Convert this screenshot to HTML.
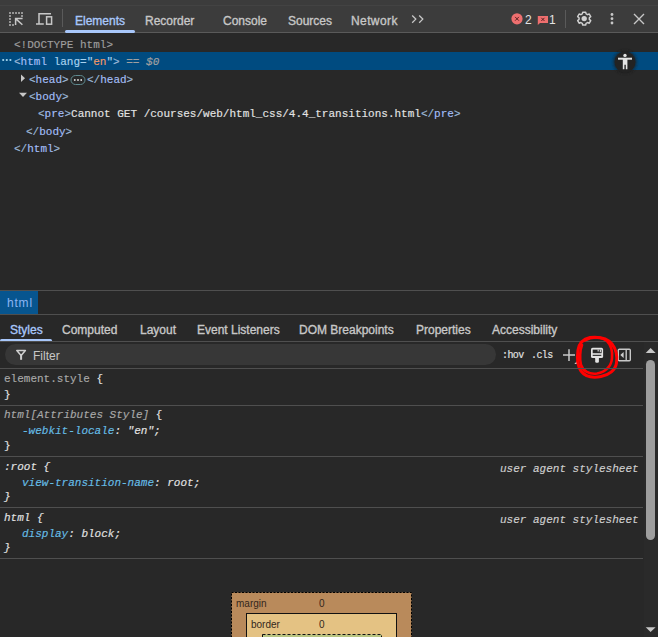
<!DOCTYPE html>
<html><head><meta charset="utf-8">
<style>
*{margin:0;padding:0;box-sizing:border-box}
html,body{width:658px;height:637px;overflow:hidden;background:#282828}
body{position:relative;font-family:"Liberation Sans",sans-serif;font-size:12px;color:#c7c7c7}
.abs{position:absolute}
.mono{font-family:"Liberation Mono",monospace;font-size:11px;white-space:pre;-webkit-text-stroke-width:0.15px}
.t{position:absolute;white-space:pre;line-height:14px}
.hl{position:absolute;left:0;width:658px;height:1px;background:#4f4f4f}
#toolbar{position:absolute;left:0;top:0;width:658px;height:32px;background:#3c3c3c}
.tab{position:absolute;top:14px;font-size:12px;color:#c7c7c7;line-height:14px;-webkit-text-stroke:0.35px #c7c7c7}
.tg{color:#a3bef7}
.br{color:#9db8d8}
.an{color:#a8d2ef}
.av{color:#f29766}
.tx{color:#e3e3e3}
.prop{color:#66bde6}
.val{color:#e3e3e3}
svg{position:absolute;overflow:visible}
</style></head>
<body>
<div id="toolbar"></div>
<div class="hl" style="top:32px;background:#5a5a5a"></div>
<div class="hl" style="top:5px;background:#434343"></div>

<!-- toolbar icons -->
<svg style="left:0;top:0" width="658" height="32" viewBox="0 0 658 32">
  <g fill="#c7c7c7">
    <rect x="9.2" y="12.2" width="1.6" height="1.6"/><rect x="12.2" y="12.2" width="1.6" height="1.6"/><rect x="15.2" y="12.2" width="1.6" height="1.6"/><rect x="18.2" y="12.2" width="1.6" height="1.6"/><rect x="21.2" y="12.2" width="1.6" height="1.6"/>
    <rect x="9.2" y="15.2" width="1.6" height="1.6"/><rect x="21.2" y="15.2" width="1.6" height="1.6"/>
    <rect x="9.2" y="18.2" width="1.6" height="1.6"/><rect x="9.2" y="21.2" width="1.6" height="1.6"/><rect x="9.2" y="24.2" width="1.6" height="1.6"/><rect x="12.2" y="24.2" width="1.6" height="1.6"/>
  </g>
  <path d="M15.6 25 V18.6 H22.6 M15.6 18.6 L22.4 24.8" stroke="#c7c7c7" stroke-width="1.5" fill="none"/>
  <path d="M51 13.7 H39 V23.9 M36 23.9 H43.8" stroke="#c7c7c7" stroke-width="1.5" fill="none"/>
  <rect x="46.6" y="16.8" width="5" height="7.4" stroke="#c7c7c7" stroke-width="1.5" fill="none"/>
  <rect x="62" y="9" width="1" height="18" fill="#5a5a5a"/>
  <!-- >> -->
  <path d="M412.2 15.5 L415.8 19.1 L412.2 22.7 M419.2 15.5 L422.8 19.1 L419.2 22.7" stroke="#c7c7c7" stroke-width="1.3" fill="none"/>
  <!-- error -->
  <circle cx="517" cy="18.8" r="5.6" fill="#ee6f6f"/>
  <path d="M515.1 16.9 L518.9 20.7 M518.9 16.9 L515.1 20.7" stroke="#4a1a1a" stroke-width="0.9"/>
  <!-- message -->
  <path d="M537.8 16 H548 V23 H540 L537.8 25 Z" fill="#ee6f6f"/>
  <path d="M541.3 17.8 L544.5 21 M544.5 17.8 L541.3 21" stroke="#4a1a1a" stroke-width="0.9"/>
  <rect x="565" y="10" width="1" height="18" fill="#5a5a5a"/>
  <!-- gear -->
  <g transform="translate(584.2 18.6) scale(0.92)">
    <path d="M-1.6,-7 L1.6,-7 L2.1,-5.1 L3.6,-4.3 L5.5,-5 L7.1,-2.2 L5.6,-0.9 L5.6,0.9 L7.1,2.2 L5.5,5 L3.6,4.3 L2.1,5.1 L1.6,7 L-1.6,7 L-2.1,5.1 L-3.6,4.3 L-5.5,5 L-7.1,2.2 L-5.6,0.9 L-5.6,-0.9 L-7.1,-2.2 L-5.5,-5 L-3.6,-4.3 L-2.1,-5.1 Z" stroke="#d0d0d0" stroke-width="1.6" fill="none" stroke-linejoin="round"/>
    <circle r="2.9" fill="#d0d0d0"/>
  </g>
  <!-- kebab -->
  <circle cx="612" cy="14.5" r="1.4" fill="#c7c7c7"/><circle cx="612" cy="18.7" r="1.4" fill="#c7c7c7"/><circle cx="612" cy="23" r="1.4" fill="#c7c7c7"/>
  <!-- close -->
  <path d="M634 14 L644 24 M644 14 L634 24" stroke="#c7c7c7" stroke-width="1.4"/>
</svg>

<!-- tabs -->
<div class="tab" style="left:75px;color:#a8c7fa;-webkit-text-stroke-color:#a8c7fa">Elements</div>
<div class="abs" style="left:65px;top:30px;width:70px;height:3px;background:#a8c7fa;border-radius:2px"></div>
<div class="tab" style="left:145px">Recorder</div>
<div class="tab" style="left:223px">Console</div>
<div class="tab" style="left:288px">Sources</div>
<div class="tab" style="left:351px;letter-spacing:0.4px">Network</div>
<div class="tab" style="left:525px;top:13px;color:#e3e3e3;-webkit-text-stroke:0">2</div>
<div class="tab" style="left:549px;top:13px;color:#e3e3e3;-webkit-text-stroke:0">1</div>

<!-- elements tree -->
<div class="abs" style="left:0;top:52px;width:658px;height:18px;background:#004b80"></div>
<svg style="left:0;top:0" width="658" height="160">
  <circle cx="3.2" cy="60" r="1.1" fill="#a8d8f0"/><circle cx="6.8" cy="60" r="1.1" fill="#a8d8f0"/><circle cx="10.4" cy="60" r="1.1" fill="#a8d8f0"/>
  <path d="M21 74.5 L25 78.2 L21 82 Z" fill="#c7c7c7"/>
  <path d="M19 92.8 L27 92.8 L23 97 Z" fill="#c7c7c7"/>
  <rect x="71" y="75.5" width="14" height="9" rx="4.5" stroke="#5f8a8f" stroke-width="1" fill="none"/>
  <circle cx="74.8" cy="80" r="0.9" fill="#e3e3e3"/><circle cx="78" cy="80" r="0.9" fill="#e3e3e3"/><circle cx="81.2" cy="80" r="0.9" fill="#e3e3e3"/>
  <!-- accessibility button -->
  <circle cx="625" cy="62" r="12" fill="#1f1f1f" opacity="0.55" filter="url(#blur)"/>
  <circle cx="625" cy="62" r="10.5" fill="#232323"/>
  <defs><filter id="blur" x="-50%" y="-50%" width="200%" height="200%"><feGaussianBlur stdDeviation="1.2"/></filter></defs>
  <circle cx="625" cy="55.4" r="1.7" fill="#e3e3e3"/>
  <path d="M618 58.7 H632" stroke="#e3e3e3" stroke-width="2" fill="none"/>
  <path d="M622.8 58.7 H627.4 V69.3 H625.8 V64.8 H624.4 V69.3 H622.8 Z" fill="#e3e3e3"/>
</svg>
<div class="mono t" style="left:14px;top:38px;color:#9e9e9e">&lt;!DOCTYPE html&gt;</div>
<div class="mono t" style="left:14px;top:55px"><span class="br">&lt;</span><span class="tg">html</span> <span class="an">lang</span><span class="an">="</span><span class="av">en</span><span class="an">"</span><span class="br">&gt;</span><span style="color:#a0a0a0"> == <i>$0</i></span></div>
<div class="mono t" style="left:29px;top:73px"><span class="br">&lt;</span><span class="tg">head</span><span class="br">&gt;</span></div>
<div class="mono t" style="left:87px;top:73px"><span class="br">&lt;/</span><span class="tg">head</span><span class="br">&gt;</span></div>
<div class="mono t" style="left:29px;top:90px"><span class="br">&lt;</span><span class="tg">body</span><span class="br">&gt;</span></div>
<div class="mono t" style="left:38px;top:107px"><span class="br">&lt;</span><span class="tg">pre</span><span class="br">&gt;</span><span class="tx">Cannot GET /courses/web/html_css/4.4_transitions.html</span><span class="br">&lt;/</span><span class="tg">pre</span><span class="br">&gt;</span></div>
<div class="mono t" style="left:26px;top:125px"><span class="br">&lt;/</span><span class="tg">body</span><span class="br">&gt;</span></div>
<div class="mono t" style="left:14px;top:142px"><span class="br">&lt;/</span><span class="tg">html</span><span class="br">&gt;</span></div>

<!-- breadcrumbs -->
<div class="hl" style="top:290px"></div>
<div class="abs" style="left:0;top:291px;width:38px;height:23px;background:#07558f"></div>
<div class="t" style="left:7px;top:296px;color:#8cb6f5;letter-spacing:0.8px">html</div>
<div class="hl" style="top:314px"></div>

<!-- sidebar tabs -->
<div class="tab" style="left:10px;top:323px;color:#a8c7fa;-webkit-text-stroke-color:#a8c7fa">Styles</div>
<div class="abs" style="left:0;top:339px;width:52px;height:3px;background:#a8c7fa;border-radius:2px"></div>
<div class="tab" style="left:62px;top:323px">Computed</div>
<div class="tab" style="left:140px;top:323px">Layout</div>
<div class="tab" style="left:197px;top:323px">Event Listeners</div>
<div class="tab" style="left:299px;top:323px">DOM Breakpoints</div>
<div class="tab" style="left:416px;top:323px">Properties</div>
<div class="tab" style="left:492px;top:323px">Accessibility</div>
<div class="hl" style="top:341px"></div>

<!-- filter -->
<div class="abs" style="left:644px;top:342px;width:14px;height:295px;background:#2a2a2a"></div>

<div class="abs" style="left:5px;top:344px;width:491px;height:21px;background:#373737;border-radius:10.5px"></div>
<svg style="left:0;top:0" width="658" height="380">
  <path d="M16.8 350.6 H25.4 L21.1 355.6 Z" stroke="#d0d0d0" stroke-width="1.5" fill="none" stroke-linejoin="round"/><rect x="20.1" y="355" width="2" height="4.8" fill="#d0d0d0"/>
  <path d="M563 355 H575 M569 349.2 V361" stroke="#c7c7c7" stroke-width="1.5"/>
  <path d="M577 361.3 L577 364 L574.3 364 Z" fill="#d0d0d0"/>
  <!-- paint brush -->
  <rect x="591" y="347.8" width="12.1" height="10.2" rx="1.6" fill="#e3e3e3"/>
  <rect x="592.7" y="349.6" width="8.9" height="3.6" fill="#282828"/>
  <rect x="597.6" y="349.6" width="1.1" height="1.9" fill="#e3e3e3"/>
  <rect x="599.8" y="349.6" width="1.1" height="2.6" fill="#e3e3e3"/>
  <rect x="592.7" y="354.8" width="8.6" height="1.1" fill="#282828"/>
  <rect x="595.2" y="357" width="3.7" height="5.8" rx="1.2" fill="#e3e3e3"/>
  <!-- sidebar toggle -->
  <rect x="618.3" y="349.2" width="12" height="11.5" stroke="#c7c7c7" stroke-width="1.4" fill="none" rx="1"/>
  <path d="M626.2 349.2 V360.7" stroke="#c7c7c7" stroke-width="1.4"/>
  <path d="M623.6 352 L620.3 355 L623.6 358 Z" fill="#d0d0d0"/>
  <!-- red annotation -->
  <g stroke="#f00" stroke-width="3" fill="none" stroke-linecap="round">
  <path d="M590 337.5 C600 336.5,608 339,612 344 C616 349,617.5 356,616.5 363 C615.5 370,609 375,601 376.5 C593 378,585 376.5,581 371 C577.5 366,577 357,578 350 C579 344,583 339,590 337.5"/>
  <path d="M585 340.5 C592 336,602 337,607 341 C611 345,612.5 352,612 358 C611.5 366,606 372,597 373.5 C589 374.5,583 371,581 365 C579.5 359,580 350,582 345" stroke-width="2.6"/>
  </g>
  <!-- scrollbar arrows -->
  <path d="M645.7 353 L650.6 348 L655.6 353 Z" fill="#c7c7c7"/>
  <path d="M645.7 627.3 L650.6 632 L655.6 627.3 Z" fill="#c7c7c7"/>
</svg>
<div class="t" style="left:33px;top:349px;color:#c7c7c7">Filter</div>
<div class="mono t" style="left:502px;top:349px;font-size:10px;letter-spacing:-0.6px;color:#e3e3e3">:hov</div>
<div class="mono t" style="left:531px;top:349px;font-size:10px;letter-spacing:-0.6px;color:#e3e3e3">.cls</div>
<div class="hl" style="top:368px;width:643px"></div>
<div class="abs" style="left:646px;top:360px;width:9px;height:180px;background:#9e9e9e;border-radius:4.5px"></div>

<!-- rules -->
<div class="mono t" style="left:4px;top:372px;color:#a8a8a8">element.style <span class="val">{</span></div>
<div class="mono t" style="left:4px;top:388px;color:#e3e3e3">}</div>
<div class="hl" style="top:405px;width:643px"></div>
<div class="mono t" style="left:4px;top:408px;color:#a8a8a8"><i>html[Attributes Style]</i> <span class="val">{</span></div>
<div class="mono t" style="left:22px;top:424px"><i><span class="prop">-webkit-locale</span><span class="val">: "en";</span></i></div>
<div class="mono t" style="left:4px;top:439px;color:#e3e3e3">}</div>
<div class="hl" style="top:456px;width:643px"></div>
<div class="mono t" style="left:4px;top:460px;color:#e3e3e3"><i>:root {</i></div>
<div class="mono t" style="left:22px;top:476px"><i><span class="prop">view-transition-name</span><span class="val">: root;</span></i></div>
<div class="mono t" style="left:4px;top:490px;color:#e3e3e3"><i>}</i></div>
<div class="mono t" style="left:500px;top:462px;color:#cfcfcf"><i>user agent stylesheet</i></div>
<div class="hl" style="top:507px;width:643px"></div>
<div class="mono t" style="left:4px;top:511px;color:#e3e3e3"><i>html {</i></div>
<div class="mono t" style="left:22px;top:527px"><i><span class="prop">display</span><span class="val">: block;</span></i></div>
<div class="mono t" style="left:4px;top:541px;color:#e3e3e3"><i>}</i></div>
<div class="mono t" style="left:500px;top:513px;color:#cfcfcf"><i>user agent stylesheet</i></div>
<div class="hl" style="top:558px;width:643px"></div>

<!-- box model -->
<svg style="left:0;top:0" width="658" height="637">
  <rect x="231.5" y="592.5" width="180" height="70" fill="#b98a5b" stroke="#000" stroke-width="1" stroke-dasharray="2 1.5"/>
  <rect x="246.5" y="613.5" width="150" height="50" fill="#e4c283" stroke="#111" stroke-width="1"/>
  <rect x="262.5" y="634.5" width="119" height="30" fill="#b8c582" stroke="#111" stroke-width="1" stroke-dasharray="3 2"/>
</svg>
<div class="t" style="left:236px;top:597px;font-size:10px;color:#33271b">margin</div>
<div class="t" style="left:319px;top:597px;font-size:10px;color:#33271b">0</div>
<div class="t" style="left:251px;top:618px;font-size:10px;color:#33271b">border</div>
<div class="t" style="left:319px;top:618px;font-size:10px;color:#33271b">0</div>
</body></html>
